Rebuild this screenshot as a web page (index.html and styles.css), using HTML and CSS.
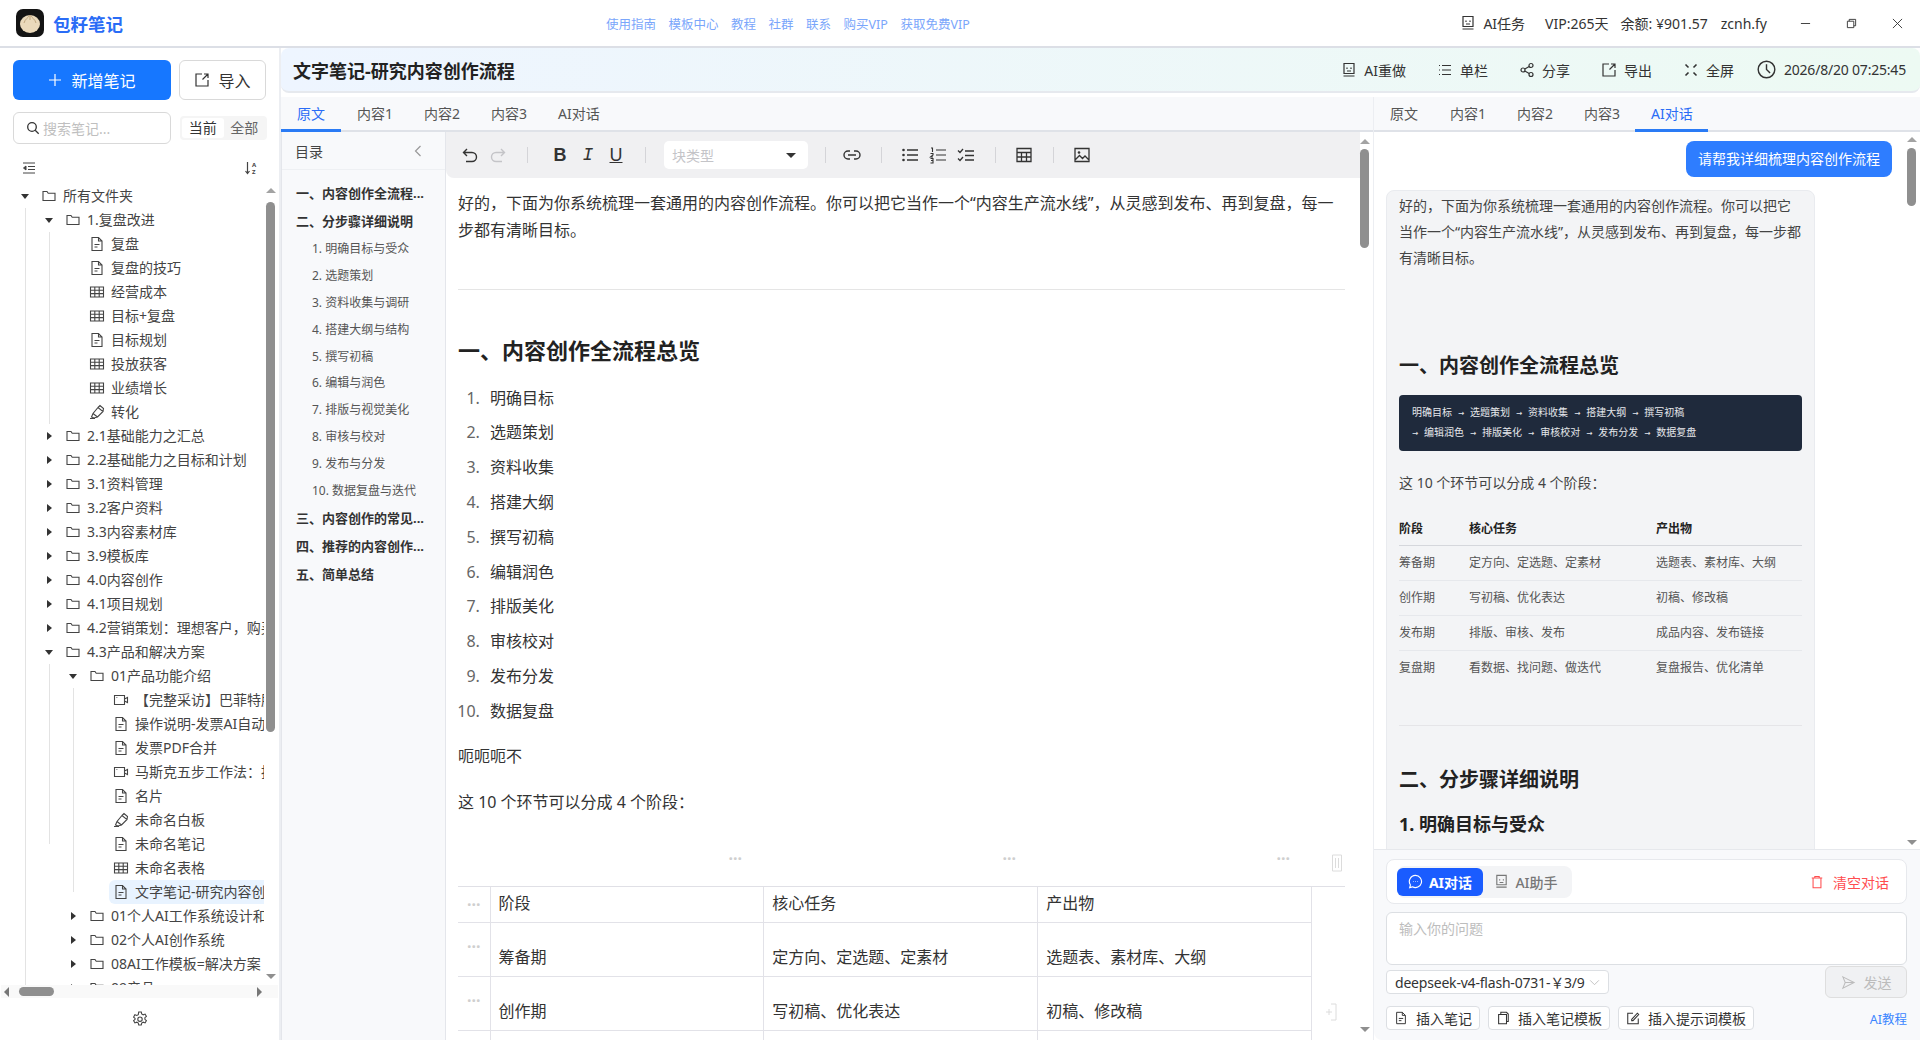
FILE: index.html
```html
<!DOCTYPE html>
<html lang="zh-CN">
<head>
  <meta charset="UTF-8">
  <title>包籽笔记</title>
  <link rel="stylesheet" href="styles.css">
</head>
<body>
  <svg class="sprite" aria-hidden="true">
    <symbol id="folder" viewBox="0 0 16 16"><path d="M2 3.5h4l1.2 1.7H14v7.3H2z" fill="none" stroke="currentColor" stroke-width="1.1"/></symbol>
    <symbol id="doc" viewBox="0 0 16 16"><path d="M3 1.5h6.5L13 5v9.5H3zM9.5 1.5V5H13M5.5 8.5h5M5.5 11h3" fill="none" stroke="currentColor" stroke-width="1.1"/></symbol>
    <symbol id="grid" viewBox="0 0 16 16"><path d="M1.5 3h13v10h-13zM1.5 6.3h13M1.5 9.6h13M5.8 3v10M10.2 3v10" fill="none" stroke="currentColor" stroke-width="1.1"/></symbol>
    <symbol id="video" viewBox="0 0 16 16"><path d="M1.5 3.5h10v9h-10zM11.5 7l3-1.5v5l-3-1.5M3.5 5.5h.8" fill="none" stroke="currentColor" stroke-width="1.1"/></symbol>
    <symbol id="board" viewBox="0 0 16 16"><path d="M1 14.5h5M2.500 13l1.500-3.500 5-6 5 4-5.500 5.500-3.500 1zM4 9.500l4.500 3.500M9 3.500l2-2 3.500 3-.5 3" fill="none" stroke="currentColor" stroke-width="1.1"/></symbol>
    <symbol id="robot" viewBox="0 0 16 16"><path d="M3 1.500h10v10H3zM2.500 14h11M6 5.500v1.500M10 5.500v1.500M6 9h4" fill="none" stroke="currentColor" stroke-width="1.2"/></symbol>
    <symbol id="lines" viewBox="0 0 16 16"><path d="M5 3.500h9M5 8h9M5 12.500h9M2 3.500h1M2 8h1M2 12.500h1" fill="none" stroke="currentColor" stroke-width="1.2"/></symbol>
    <symbol id="share" viewBox="0 0 16 16"><circle cx="4" cy="8" r="2" fill="none" stroke="currentColor" stroke-width="1.2"/><circle cx="12" cy="3.5" r="2" fill="none" stroke="currentColor" stroke-width="1.2"/><circle cx="12" cy="12.5" r="2" fill="none" stroke="currentColor" stroke-width="1.2"/><path d="M5.800 7l4.400-2.500M5.800 9l4.400 2.500" stroke="currentColor" stroke-width="1.2"/></symbol>
    <symbol id="export" viewBox="0 0 16 16"><path d="M8 2H2v12h12V8M8.500 7.500L14 2M10 2h4v4" fill="none" stroke="currentColor" stroke-width="1.2"/></symbol>
    <symbol id="full" viewBox="0 0 16 16"><path d="M2.500 2.500l3 3M13.500 2.500l-3 3M2.500 13.500l3-3M13.500 13.500l-3-3" fill="none" stroke="currentColor" stroke-width="1.6"/></symbol>
    <symbol id="clock" viewBox="0 0 16 16"><circle cx="8" cy="8" r="7" fill="none" stroke="currentColor" stroke-width="1.2"/><path d="M8 3.500V8l3 3" fill="none" stroke="currentColor" stroke-width="1.2"/></symbol>
    <symbol id="trash" viewBox="0 0 16 16"><path d="M2 3.500h12M5.500 3.500V1.800h5v1.700M3.500 3.500v11h9v-11" fill="none" stroke="currentColor" stroke-width="1.2"/></symbol>
  </svg>

  <header class="topbar">
    <div class="brand">
      <svg class="logo" viewBox="0 0 28 28"><rect width="28" height="28" rx="7" fill="#141414"/><ellipse cx="14" cy="15" rx="10" ry="9" fill="#ead9bb"/><path d="M14 6c-2 3-5 4-6 8M14 6c2 3 5 4 6 8M14 6v5" fill="none" stroke="#bfa67f" stroke-width="1"/></svg>
      <span>包籽笔记</span>
    </div>
    <nav class="topnav">
      <a>使用指南</a><a>模板中心</a><a>教程</a><a>社群</a><a>联系</a><a>购买VIP</a><a>获取免费VIP</a>
    </nav>
    <div class="topright">
      <span class="with-icon"><svg class="ic16"><use href="#robot"/></svg>AI任务</span>
      <span class="vip">VIP:265天</span>
      <span class="money">余额: ¥901.57</span>
      <span class="user">zcnh.fy</span>
    </div>
    <div class="winctl">
      <button><svg viewBox="0 0 12 12"><path d="M1 6h10" stroke="#333"/></svg></button>
      <button><svg viewBox="0 0 12 12"><path d="M1.500 3.500h7v7h-7zM3.500 3.500v-2h7v7h-2" fill="none" stroke="#333"/></svg></button>
      <button><svg viewBox="0 0 12 12"><path d="M1 1l10 10M11 1L1 11" stroke="#333"/></svg></button>
    </div>
  </header>

  <div class="layout">
    <aside class="sidebar">
      <div class="side-actions">
        <button class="btn-new"><svg viewBox="0 0 14 14"><path d="M7 1v12M1 7h12" stroke="#fff" stroke-width="1.2"/></svg>新增笔记</button>
        <button class="btn-import"><svg class="ic16"><use href="#export"/></svg>导入</button>
      </div>
      <div class="side-search">
        <div class="search">
          <svg viewBox="0 0 14 14"><circle cx="6" cy="6" r="4.300" fill="none" stroke="#333" stroke-width="1.3"/><path d="M9.200 9.200l3.500 3.500" stroke="#333" stroke-width="1.3"/></svg>
          <span>搜索笔记...</span>
        </div>
        <div class="scope"><span class="on">当前</span><span>全部</span></div>
      </div>
      <div class="tree-tools">
        <svg viewBox="0 0 14 12"><path d="M1 1h12M6 4.500h7M6 7.500h7M1 11h12M4 4L1.500 6 4 8z" fill="#444" stroke="#444" stroke-width="1"/></svg>
        <svg viewBox="0 0 14 14"><path d="M3.500 1v11M1.500 10l2 2.500 2-2.500" fill="none" stroke="#444" stroke-width="1.2"/><text x="8" y="6" class="az">A</text><text x="8" y="13" class="az">Z</text></svg>
      </div>
      <div class="tree-wrap">
        <div class="tree">
          <div class="row"><i class="caret open"></i><svg class="ic"><use href="#folder"/></svg><span>所有文件夹</span></div>
          <div class="row"><i class="ind g"></i><i class="caret open"></i><svg class="ic"><use href="#folder"/></svg><span>1.复盘改进</span></div>
          <div class="row"><i class="ind g"></i><i class="ind g"></i><i class="caret"></i><svg class="ic"><use href="#doc"/></svg><span>复盘</span></div>
          <div class="row"><i class="ind g"></i><i class="ind g"></i><i class="caret"></i><svg class="ic"><use href="#doc"/></svg><span>复盘的技巧</span></div>
          <div class="row"><i class="ind g"></i><i class="ind g"></i><i class="caret"></i><svg class="ic"><use href="#grid"/></svg><span>经营成本</span></div>
          <div class="row"><i class="ind g"></i><i class="ind g"></i><i class="caret"></i><svg class="ic"><use href="#grid"/></svg><span>目标+复盘</span></div>
          <div class="row"><i class="ind g"></i><i class="ind g"></i><i class="caret"></i><svg class="ic"><use href="#doc"/></svg><span>目标规划</span></div>
          <div class="row"><i class="ind g"></i><i class="ind g"></i><i class="caret"></i><svg class="ic"><use href="#grid"/></svg><span>投放获客</span></div>
          <div class="row"><i class="ind g"></i><i class="ind g"></i><i class="caret"></i><svg class="ic"><use href="#grid"/></svg><span>业绩增长</span></div>
          <div class="row"><i class="ind g"></i><i class="ind g"></i><i class="caret"></i><svg class="ic"><use href="#board"/></svg><span>转化</span></div>
          <div class="row"><i class="ind g"></i><i class="caret shut"></i><svg class="ic"><use href="#folder"/></svg><span>2.1基础能力之汇总</span></div>
          <div class="row"><i class="ind g"></i><i class="caret shut"></i><svg class="ic"><use href="#folder"/></svg><span>2.2基础能力之目标和计划</span></div>
          <div class="row"><i class="ind g"></i><i class="caret shut"></i><svg class="ic"><use href="#folder"/></svg><span>3.1资料管理</span></div>
          <div class="row"><i class="ind g"></i><i class="caret shut"></i><svg class="ic"><use href="#folder"/></svg><span>3.2客户资料</span></div>
          <div class="row"><i class="ind g"></i><i class="caret shut"></i><svg class="ic"><use href="#folder"/></svg><span>3.3内容素材库</span></div>
          <div class="row"><i class="ind g"></i><i class="caret shut"></i><svg class="ic"><use href="#folder"/></svg><span>3.9模板库</span></div>
          <div class="row"><i class="ind g"></i><i class="caret shut"></i><svg class="ic"><use href="#folder"/></svg><span>4.0内容创作</span></div>
          <div class="row"><i class="ind g"></i><i class="caret shut"></i><svg class="ic"><use href="#folder"/></svg><span>4.1项目规划</span></div>
          <div class="row"><i class="ind g"></i><i class="caret shut"></i><svg class="ic"><use href="#folder"/></svg><span>4.2营销策划：理想客户，购买路径</span></div>
          <div class="row"><i class="ind g"></i><i class="caret open"></i><svg class="ic"><use href="#folder"/></svg><span>4.3产品和解决方案</span></div>
          <div class="row"><i class="ind g"></i><i class="ind g"></i><i class="caret open"></i><svg class="ic"><use href="#folder"/></svg><span>01产品功能介绍</span></div>
          <div class="row"><i class="ind g"></i><i class="ind g"></i><i class="ind g"></i><i class="caret"></i><svg class="ic"><use href="#video"/></svg><span>【完整采访】巴菲特股东大会</span></div>
          <div class="row"><i class="ind g"></i><i class="ind g"></i><i class="ind g"></i><i class="caret"></i><svg class="ic"><use href="#doc"/></svg><span>操作说明-发票AI自动化处理</span></div>
          <div class="row"><i class="ind g"></i><i class="ind g"></i><i class="ind g"></i><i class="caret"></i><svg class="ic"><use href="#doc"/></svg><span>发票PDF合并</span></div>
          <div class="row"><i class="ind g"></i><i class="ind g"></i><i class="ind g"></i><i class="caret"></i><svg class="ic"><use href="#video"/></svg><span>马斯克五步工作法：拆解</span></div>
          <div class="row"><i class="ind g"></i><i class="ind g"></i><i class="ind g"></i><i class="caret"></i><svg class="ic"><use href="#doc"/></svg><span>名片</span></div>
          <div class="row"><i class="ind g"></i><i class="ind g"></i><i class="ind g"></i><i class="caret"></i><svg class="ic"><use href="#board"/></svg><span>未命名白板</span></div>
          <div class="row"><i class="ind g"></i><i class="ind g half"></i><i class="ind g"></i><i class="caret"></i><svg class="ic"><use href="#doc"/></svg><span>未命名笔记</span></div>
          <div class="row"><i class="ind g"></i><i class="ind"></i><i class="ind g"></i><i class="caret"></i><svg class="ic"><use href="#grid"/></svg><span>未命名表格</span></div>
          <div class="row"><i class="ind g"></i><i class="ind"></i><i class="ind g half"></i><i class="caret"></i><div class="selected"><svg class="ic"><use href="#doc"/></svg><span>文字笔记-研究内容创作流程</span></div></div>
          <div class="row"><i class="ind g"></i><i class="ind"></i><i class="caret shut"></i><svg class="ic"><use href="#folder"/></svg><span>01个人AI工作系统设计和实践</span></div>
          <div class="row"><i class="ind g"></i><i class="ind"></i><i class="caret shut"></i><svg class="ic"><use href="#folder"/></svg><span>02个人AI创作系统</span></div>
          <div class="row"><i class="ind g"></i><i class="ind"></i><i class="caret shut"></i><svg class="ic"><use href="#folder"/></svg><span>08AI工作模板=解决方案</span></div>
          <div class="row"><i class="ind g"></i><i class="ind"></i><i class="caret shut"></i><svg class="ic"><use href="#folder"/></svg><span>09产品</span></div>
        </div>
        <div class="vbar tree-bar"><i class="up"></i><b></b><i class="down"></i></div>
      </div>
      <div class="hbar"><i class="left"></i><b></b><i class="right"></i></div>
      <div class="side-foot">
        <svg viewBox="0 0 16 16"><path d="M6.700 1h2.600l.4 2 1.500.8 1.900-.7 1.300 2.300-1.500 1.300v1.600l1.500 1.300-1.300 2.300-1.900-.7-1.500.8-.4 2H6.700l-.4-2-1.500-.8-1.900.7-1.300-2.300 1.500-1.300V7.400L1.600 6.100l1.300-2.300 1.900.7 1.500-.8z" fill="none" stroke="#444" stroke-width="1.1"/><circle cx="8" cy="8.200" r="2.200" fill="none" stroke="#444" stroke-width="1.1"/></svg>
      </div>
    </aside>

    <main class="main">
      <div class="titlebar">
        <h1>文字笔记-研究内容创作流程</h1>
        <div class="title-actions">
          <span class="with-icon"><svg class="ic16"><use href="#robot"/></svg>AI重做</span>
          <span class="with-icon"><svg class="ic16"><use href="#lines"/></svg>单栏</span>
          <span class="with-icon"><svg class="ic16"><use href="#share"/></svg>分享</span>
          <span class="with-icon"><svg class="ic16"><use href="#export"/></svg>导出</span>
          <span class="with-icon"><svg class="ic16"><use href="#full"/></svg>全屏</span>
          <span class="with-icon time"><svg class="ic18"><use href="#clock"/></svg>2026/8/20 07:25:45</span>
        </div>
      </div>

      <div class="panes">
        <section class="pane-left">
          <div class="tabs">
            <a class="active">原文</a><a>内容1</a><a>内容2</a><a>内容3</a><a>AI对话</a>
          </div>
          <div class="left-body">
            <div class="toc">
              <div class="toc-head"><span>目录</span><svg viewBox="0 0 10 12"><path d="M7.500 1L2.500 6l5 5" fill="none" stroke="#999" stroke-width="1.2"/></svg></div>
              <ul class="toc-list">
                <li class="lv1">一、内容创作全流程...</li>
                <li class="lv1">二、分步骤详细说明</li>
                <li class="lv2">1. 明确目标与受众</li>
                <li class="lv2">2. 选题策划</li>
                <li class="lv2">3. 资料收集与调研</li>
                <li class="lv2">4. 搭建大纲与结构</li>
                <li class="lv2">5. 撰写初稿</li>
                <li class="lv2">6. 编辑与润色</li>
                <li class="lv2">7. 排版与视觉美化</li>
                <li class="lv2">8. 审核与校对</li>
                <li class="lv2">9. 发布与分发</li>
                <li class="lv2">10. 数据复盘与迭代</li>
                <li class="lv1">三、内容创作的常见...</li>
                <li class="lv1">四、推荐的内容创作...</li>
                <li class="lv1">五、简单总结</li>
              </ul>
            </div>
            <div class="editor">
              <div class="toolbar">
                <svg class="tb" viewBox="0 0 18 18"><path d="M6 3L2.500 6.500 6 10M3 6.500h8a4 4 0 0 1 0 9H5" fill="none" stroke="#333" stroke-width="1.4"/></svg>
                <svg class="tb" viewBox="0 0 18 18"><path d="M12 3l3.500 3.500L12 10M15 6.500H7a4 4 0 0 0 0 9h6" fill="none" stroke="#c4c4c8" stroke-width="1.4"/></svg>
                <i class="sep wide"></i>
                <b class="fmt">B</b><em class="fmt">I</em><u class="fmt">U</u>
                <i class="sep"></i>
                <div class="blocktype"><span>块类型</span><i></i></div>
                <i class="sep"></i>
                <svg class="tb link" viewBox="0 0 20 18"><path d="M8 5H6a4 4 0 0 0 0 8h2M12 5h2a4 4 0 0 1 0 8h-2M6 9h8" fill="none" stroke="#333" stroke-width="1.4"/></svg>
                <i class="sep"></i>
                <svg class="tb" viewBox="0 0 18 18"><path d="M6 4h11M6 9h11M6 14h11" stroke="#333" stroke-width="1.3"/><circle cx="2.500" cy="4" r="1.3" fill="#333"/><circle cx="2.500" cy="9" r="1.3" fill="#333"/><circle cx="2.500" cy="14" r="1.3" fill="#333"/></svg>
                <svg class="tb" viewBox="0 0 18 18"><path d="M7 4h10M7 9h10M7 14h10M2 2h1.500v4M1.500 7.500H4V9L1.500 11H4M1.500 12.500H4V17H1.500M2 14.500h2" fill="none" stroke="#333" stroke-width="1.1"/></svg>
                <svg class="tb" viewBox="0 0 18 18"><path d="M8 5h9M8 9.500h9M8 14h9M1 4.500l2 2 3-3.500M1 12.500l2 2 3-3.500" fill="none" stroke="#333" stroke-width="1.3"/></svg>
                <i class="sep"></i>
                <svg class="tb" viewBox="0 0 18 18"><path d="M2 2.500h14v13H2zM2 6.500h14M2 11h14M6.500 6.500v9M11.500 6.500v9" fill="none" stroke="#333" stroke-width="1.3"/></svg>
                <i class="sep"></i>
                <svg class="tb" viewBox="0 0 18 18"><path d="M2 2.500h14v13H2zM2.500 13.500l4-4 3 3 2.500-2.500 3.500 3.500" fill="none" stroke="#333" stroke-width="1.3"/><circle cx="6" cy="6.500" r="1.3" fill="#333"/></svg>
              </div>
              <div class="doc">
                <p class="intro">好的，下面为你系统梳理一套通用的内容创作流程。你可以把它当作一个“内容生产流水线”，从灵感到发布、再到复盘，每一步都有清晰目标。</p>
                <hr>
                <h2>一、内容创作全流程总览</h2>
                <ol>
                  <li>明确目标</li><li>选题策划</li><li>资料收集</li><li>搭建大纲</li><li>撰写初稿</li>
                  <li>编辑润色</li><li>排版美化</li><li>审核校对</li><li>发布分发</li><li>数据复盘</li>
                </ol>
                <p class="p1">呃呃呃不</p>
                <p class="p2">这 10 个环节可以分成 4 个阶段：</p>
                <div class="col-handles">
                  <span>···</span><span>···</span><span>···</span>
                  <svg viewBox="0 0 12 18"><path d="M1.500 1h9v16h-9zM4.500 4v10M7.500 4v10" fill="none" stroke="#dcdcdc"/></svg>
                </div>
                <div class="table-wrap">
                  <table class="edit-table">
                    <tr class="head"><td class="h">···</td><td>阶段</td><td>核心任务</td><td>产出物</td></tr>
                    <tr><td class="h">···</td><td>筹备期</td><td>定方向、定选题、定素材</td><td>选题表、素材库、大纲</td></tr>
                    <tr><td class="h">···</td><td>创作期</td><td>写初稿、优化表达</td><td>初稿、修改稿</td></tr>
                    <tr><td class="h">···</td><td>发布期</td><td>排版、审核、发布</td><td>成品内容、发布链接</td></tr>
                  </table>
                  <svg class="add-col" viewBox="0 0 12 18"><path d="M6 1h5v16H6M1 9h6M4 6v6" fill="none" stroke="#dcdcdc"/></svg>
                </div>
              </div>
            </div>
            <div class="vbar doc-bar"><i class="up"></i><b></b><i class="down"></i></div>
          </div>
        </section>

        <section class="pane-right">
          <div class="tabs">
            <a>原文</a><a>内容1</a><a>内容2</a><a>内容3</a><a class="active">AI对话</a>
          </div>
          <div class="chat-scroll">
            <div class="messages">
              <div class="msg-user">请帮我详细梳理内容创作流程</div>
              <div class="msg-ai">
                <p class="ai-intro">好的，下面为你系统梳理一套通用的内容创作流程。你可以把它当作一个“内容生产流水线”，从灵感到发布、再到复盘，每一步都有清晰目标。</p>
                <h2 class="ai-h1">一、内容创作全流程总览</h2>
                <pre>明确目标 → 选题策划 → 资料收集 → 搭建大纲 → 撰写初稿
→ 编辑润色 → 排版美化 → 审核校对 → 发布分发 → 数据复盘</pre>
                <p class="ai-p">这 10 个环节可以分成 4 个阶段：</p>
                <table class="ai-table">
                  <tr><th>阶段</th><th>核心任务</th><th>产出物</th></tr>
                  <tr><td>筹备期</td><td>定方向、定选题、定素材</td><td>选题表、素材库、大纲</td></tr>
                  <tr><td>创作期</td><td>写初稿、优化表达</td><td>初稿、修改稿</td></tr>
                  <tr><td>发布期</td><td>排版、审核、发布</td><td>成品内容、发布链接</td></tr>
                  <tr><td>复盘期</td><td>看数据、找问题、做迭代</td><td>复盘报告、优化清单</td></tr>
                </table>
                <hr>
                <h2 class="ai-h2">二、分步骤详细说明</h2>
                <h3>1. 明确目标与受众</h3>
              </div>
            </div>
            <div class="vbar chat-bar"><i class="up"></i><b></b><i class="down"></i></div>
          </div>
          <div class="chat-panel">
            <div class="mode-box">
              <div class="modes">
                <span class="mode on"><svg viewBox="0 0 16 16"><path d="M8 1.500a6.500 6.500 0 1 1-3.200 12.200L1.800 14.500l.8-2.800A6.500 6.500 0 0 1 8 1.500z" fill="none" stroke="#fff" stroke-width="1.2"/><path d="M5.300 8h.6M7.700 8h.6M10.100 8h.6" stroke="#fff" stroke-width="1.2"/></svg>AI对话</span>
                <span class="mode"><svg class="ic14"><use href="#robot"/></svg>AI助手</span>
              </div>
              <span class="clear"><svg class="ic14"><use href="#trash"/></svg>清空对话</span>
            </div>
            <div class="ask">输入你的问题</div>
            <div class="model-row">
              <div class="model"><span>deepseek-v4-flash-0731-￥3/9</span><svg viewBox="0 0 12 8"><path d="M1 1.500l5 5 5-5" fill="none" stroke="#bbb"/></svg></div>
              <button class="send"><svg viewBox="0 0 16 16"><path d="M2 2l12 6-12 6 2.500-6zM4.500 8H14" fill="none" stroke="#bcbcbc" stroke-width="1.1"/></svg>发送</button>
            </div>
            <div class="insert-row">
              <button><svg class="ic14"><use href="#doc"/></svg>插入笔记</button>
              <button><svg viewBox="0 0 16 16" class="ic14"><path d="M3 4h9v10.500H3zM5.500 4V1.500h6.500L14 3.500V12h-2" fill="none" stroke="currentColor" stroke-width="1.2"/></svg>插入笔记模板</button>
              <button><svg viewBox="0 0 16 16" class="ic14"><path d="M8 2.500H2v12h12V8.500M6.500 9.500L13 2.500l1.500 1.500-6.500 7H6.500z" fill="none" stroke="currentColor" stroke-width="1.2"/></svg>插入提示词模板</button>
              <a>AI教程</a>
            </div>
          </div>
        </section>
      </div>
    </main>
  </div>
</body>
</html>
```

FILE: styles.css
```css
:root {
  --blue: #1677ff;
  --line: #e4e6eb;
  --pane: #f8f9fb;
  --text: #333;
  --sans: "Noto Sans", "Noto Sans CJK SC", sans-serif;
}
* { box-sizing: border-box; }
html, body {
  margin: 0;
  height: 1040px;
  overflow: hidden;
}
body {
  font-family: var(--sans);
  font-size: 14px;
  color: var(--text);
  background: #fff;
}
svg { display: block; flex: none; }
button { font-family: inherit; }
.sprite { display: none; }
.ic { width: 16px; height: 16px; margin: 0 6px 0 4px; color: #444; }
.ic14 { width: 14px; height: 14px; }
.ic16 { width: 16px; height: 16px; }
.ic18 { width: 19px; height: 19px; }
.with-icon { display: flex; align-items: center; gap: 7px; }

/* top bar */
.topbar {
  height: 48px;
  display: flex;
  align-items: center;
  border-bottom: 2px solid #dcdfe6;
}
.brand {
  display: flex;
  align-items: center;
  gap: 9px;
  margin-left: 16px;
  width: 106px;
  flex: none;
  font-size: 17.5px;
  font-weight: 700;
  color: #2a6cf6;
  white-space: nowrap;
}
.logo { width: 28px; height: 28px; }
.topnav {
  display: flex;
  gap: 12.5px;
  margin-left: 484px;
  font-size: 12.5px;
  color: #7aa6fb;
}
.topright {
  display: flex;
  align-items: center;
  margin-left: auto;
  white-space: nowrap;
}
.vip { margin-left: 20px; }
.money { margin-left: 12px; }
.user { margin-left: 13px; margin-right: 15px; }
.winctl { display: flex; }
.winctl button {
  width: 46px;
  height: 46px;
  border: 0;
  background: none;
  display: flex;
  align-items: center;
  justify-content: center;
  padding: 0;
}
.winctl svg { width: 11px; height: 11px; }

.layout {
  height: 992px;
  display: grid;
  grid-template-columns: 281px 1fr;
  grid-template-rows: 992px;
}

/* sidebar */
.sidebar {
  display: flex;
  flex-direction: column;
  border-right: 2px solid #eceef2;
  min-width: 0;
  min-height: 0;
  overflow: hidden;
}
.side-actions {
  display: flex;
  gap: 8px;
  padding: 12px 0 0 13px;
}
.btn-new {
  width: 158px;
  height: 40px;
  border: 0;
  border-radius: 6px;
  background: var(--blue);
  color: #fff;
  font-size: 16px;
  display: flex;
  align-items: center;
  justify-content: center;
  gap: 9px;
}
.btn-new svg { width: 14px; height: 14px; }
.btn-import {
  width: 87px;
  height: 40px;
  border: 1px solid #d9d9d9;
  border-radius: 6px;
  background: #fff;
  color: #333;
  font-size: 16px;
  display: flex;
  align-items: center;
  justify-content: center;
  gap: 8px;
}
.side-search {
  display: flex;
  gap: 9px;
  padding: 12px 0 0 13px;
  align-items: center;
}
.search {
  width: 158px;
  height: 32px;
  border: 1px solid #d9d9d9;
  border-radius: 6px;
  display: flex;
  align-items: center;
  gap: 3px;
  padding-left: 12px;
  color: #bfbfbf;
}
.search svg { width: 14px; height: 14px; }
.scope {
  display: flex;
  width: 87px;
  height: 24px;
  padding: 2px;
  border-radius: 4px;
  background: #f5f5f5;
  color: #666;
  line-height: 20px;
}
.scope span { flex: 1; text-align: center; }
.scope .on { background: #fff; color: #333; border-radius: 3px; }
.tree-tools {
  height: 40px;
  display: flex;
  justify-content: space-between;
  padding: 18px 21px 0 22px;
  flex: none;
}
.tree-tools svg:first-child { width: 14px; height: 12px; }
.tree-tools svg:last-child { width: 14px; height: 14px; margin-top: -1px; }
.az { font-size: 6px; font-weight: 700; fill: #444; }
.tree-wrap {
  display: flex;
  height: 801px;
  flex: none;
}
.tree {
  width: 264px;
  flex: none;
  padding-left: 13px;
  overflow: hidden;
}
.row {
  height: 24px;
  display: flex;
  align-items: center;
  white-space: nowrap;
  color: #444;
}
.row span { margin-bottom: 2px; }
.ind { width: 24px; height: 24px; flex: none; }
.ind.g::before {
  content: "";
  display: block;
  width: 12px;
  height: 24px;
  margin-left: 12px;
  border-left: 1px solid #e3e3e3;
}
.ind.half::before { height: 12px; }
.caret { width: 24px; height: 24px; flex: none; display: flex; align-items: center; justify-content: center; }
.caret.open::before {
  content: "";
  border: 4px solid transparent;
  border-top: 5px solid #333;
  border-bottom: 0;
  width: 0;
}
.caret.shut::before {
  content: "";
  border: 4px solid transparent;
  border-left: 5px solid #333;
  border-right: 0;
}
.selected {
  display: flex;
  align-items: center;
  height: 24px;
  flex: 1;
  border-radius: 6px 0 0 6px;
  background: #e8f3ff;
  overflow: hidden;
}
.vbar {
  display: flex;
  flex-direction: column;
  align-items: center;
  flex: none;
}
.vbar b { display: block; width: 9px; background: #8f8f8f; border-radius: 5px; }
.vbar .up, .vbar .down { width: 0; border: 5px solid transparent; flex: none; }
.vbar .up { border-bottom: 5px solid #a3a3a3; border-top: 0; }
.vbar .down { border-top: 5px solid #8f8f8f; border-bottom: 0; margin-top: auto; }
.tree-bar { width: 13px; padding: 4px 0 6px; }
.tree-bar b { height: 530px; margin-top: 9px; }
.hbar {
  height: 13px;
  flex: none;
  margin-left: 1px;
  background: #f9f9f9;
  display: flex;
  align-items: center;
  padding: 0 16px 0 3px;
  width: 277px;
}
.hbar b { width: 35px; height: 9px; border-radius: 5px; background: #8f8f8f; margin-left: 10px; }
.hbar i { width: 0; border: 5px solid transparent; }
.hbar .left { border-right: 5px solid #777; border-left: 0; }
.hbar .right { border-left: 5px solid #777; border-right: 0; margin-left: auto; }
.side-foot {
  flex: 1;
  display: flex;
  align-items: center;
  justify-content: center;
}
.side-foot svg { width: 16px; height: 16px; }

/* title bar */
.main { display: flex; flex-direction: column; min-width: 0; min-height: 0; }
.titlebar {
  height: 45px;
  flex: none;
  display: flex;
  align-items: center;
  justify-content: space-between;
  padding: 0 14px 0 12px;
  border-radius: 8px;
  border-bottom: 2px solid #e6e9ee;
  background: linear-gradient(90deg, #eef5ff, #edfaf3);
}
.titlebar h1 { margin: 0; font-size: 18px; font-weight: 700; color: #222; }
.title-actions { display: flex; gap: 31px; align-items: center; }
.title-actions .time { gap: 8px; margin-left: -8px; letter-spacing: -0.2px; }

/* panes */
.panes {
  flex: 1;
  min-height: 0;
  margin-top: 4px;
  display: grid;
  grid-template-columns: 1092px 1fr;
  grid-template-rows: 943px;
}
.pane-left, .pane-right {
  display: flex;
  flex-direction: column;
  min-height: 0;
  min-width: 0;
}
.tabs {
  height: 35px;
  flex: none;
  display: flex;
  background: var(--pane);
  border-bottom: 2px solid #dfe2e8;
  color: #555;
}
.tabs a { padding: 0 15px 0 16px; line-height: 33px; height: 35px; }
.tabs a:first-child { padding-right: 16px; }
.tabs .active { color: #2a6cf6; border-bottom: 3px solid #2a7bf5; }
.left-body { flex: 1; min-height: 0; display: flex; }
.toc {
  width: 165px;
  flex: none;
  background: var(--pane);
  border-right: 1px solid var(--line);
  border-left: 1px solid var(--line);
}
.toc-head {
  height: 38px;
  display: flex;
  align-items: center;
  justify-content: space-between;
  padding: 0 22px 0 13px;
  border-bottom: 1px solid #eef0f3;
  color: #444;
}
.toc-head svg { width: 10px; height: 12px; }
.toc-list { list-style: none; margin: 0; padding: 10px 0 0; }
.toc-list .lv1 { height: 28px; line-height: 26px; padding-left: 14px; font-size: 13px; font-weight: 700; color: #333; }
.toc-list .lv2 { height: 26.9px; line-height: 26.9px; padding-left: 30px; font-size: 12px; color: #555; }

/* editor */
.editor { width: 914px; flex: none; display: flex; flex-direction: column; min-height: 0; }
.toolbar {
  height: 46px;
  flex: none;
  display: flex;
  align-items: center;
  padding-left: 15px;
  background: #f0f0f2;
  border-radius: 0 0 0 8px;
}
.tb { width: 18px; height: 18px; margin-right: 10px; }
.tb.link { width: 20px; margin: 0 9px 0 -3px; }
.sep { width: 1px; height: 16px; background: #d4d4d8; margin: 0 19px 0 10px; }
.sep.wide { margin-right: 23px; }
.fmt {
  width: 18px;
  margin-right: 10px;
  text-align: center;
  font-family: "Liberation Sans", sans-serif;
  font-size: 18px;
  font-style: normal;
  color: #333;
}
em.fmt { font-family: "Liberation Mono", monospace; font-style: italic; }
.blocktype {
  width: 144px;
  height: 28px;
  background: #fff;
  border-radius: 5px;
  display: flex;
  align-items: center;
  justify-content: space-between;
  padding: 0 12px 0 8px;
  color: #c4c4c8;
  margin-right: 7px;
  margin-left: -1px;
}
.blocktype i { border: 5px solid transparent; border-top: 5px solid #333; border-bottom: 0; }
.doc {
  flex: 1;
  min-height: 0;
  overflow: hidden;
  padding: 12px 15px 0 12px;
  font-size: 16px;
  line-height: 27px;
  color: #333;
}
.doc p { margin: 0; }
.doc hr { margin: 45px 0 0; border: 0; border-top: 1px solid #e5e5e5; }
.doc h2 { margin: 45px 0 0; font-size: 22px; line-height: 30px; font-weight: 700; color: #222; }
.doc ol { margin: 15.6px 0 0; padding: 0 0 0 26px; }
.doc li { height: 34.8px; line-height: 34.8px; padding-left: 6px; }
.doc li::marker { color: #666; }
.doc .p1 { margin-top: 14px; }
.doc .p2 { margin-top: 19px; }
.col-handles {
  margin-top: 33px;
  height: 37px;
  display: grid;
  grid-template-columns: 32px 274px 274px 274px 1fr;
  color: #cfcfcf;
  font-size: 16px;
  font-weight: 700;
  line-height: 18px;
}
.col-handles span { text-align: right; padding-right: 22px; }
.col-handles span:first-child { grid-column: 2; }
.col-handles svg { width: 12px; height: 18px; margin: 5px 0 0 19px; }
.table-wrap { display: flex; border-top: 1px solid #e0e0e6; }
.edit-table {
  width: 854px;
  flex: none;
  table-layout: fixed;
  border-collapse: collapse;
}
.edit-table td {
  border: 1px solid #e2e2e8;
  border-top: 0;
  padding: 0 8px 5px 8px;
  vertical-align: bottom;
  height: 54px;
}
.edit-table td:first-child { width: 32px; border-left: 0; }
.edit-table .head td { height: 36px; vertical-align: middle; padding-bottom: 1px; }
.edit-table td.h {
  color: #cfcfcf;
  text-align: center;
  vertical-align: top;
  font-size: 16px;
  font-weight: 700;
  line-height: 16px;
  padding: 15px 0 0;
}
.edit-table .head td.h { vertical-align: top; padding-top: 9px; }
.add-col { width: 12px; height: 18px; margin: 116px 0 0 13px; }
.doc-bar { width: 12px; padding: 7px 3px 8px 0; background: #fff; }
.doc-bar b { height: 99px; margin-top: 5px; }

/* ai chat */
.pane-right { border-left: 1px solid #eceef2; }
.chat-scroll {
  height: 717px;
  flex: none;
  display: flex;
  overflow: hidden;
}
.messages {
  width: 533px;
  flex: none;
  overflow: hidden;
  padding: 9px 15px 0 12px;
}
.msg-user {
  width: 206px;
  height: 36px;
  margin-left: auto;
  border-radius: 8px;
  background: #2e7dff;
  color: #fff;
  line-height: 36px;
  text-align: center;
}
.msg-ai {
  width: 429px;
  margin-top: 13px;
  padding: 2px 12px 0;
  height: 700px;
  background: #f3f4f6;
  border-radius: 8px;
  border: 1px solid #e9ebef;
  color: #444;
  line-height: 26px;
}
.msg-ai p { margin: 0; }
.ai-h1, .ai-h2 { font-size: 20px; line-height: 28px; font-weight: 700; color: #222; }
.ai-h1 { margin: 81px 0 0; }
.ai-h2 { margin: 40px 0 0; }
.msg-ai pre {
  margin: 15px 0 0;
  padding: 8px 13px;
  height: 56px;
  background: #1f2a3c;
  border-radius: 4px;
  color: #e5e7eb;
  font-family: "DejaVu Sans Mono", "Noto Sans CJK SC", monospace;
  font-size: 10px;
  line-height: 20px;
}
.msg-ai .ai-p { margin-top: 19px; }
.ai-table {
  width: 100%;
  margin-top: 17px;
  border-collapse: collapse;
  table-layout: fixed;
  font-size: 12px;
}
.ai-table th { height: 32px; text-align: left; font-weight: 700; color: #222; border-bottom: 1px solid #d5d7dc; padding: 0; }
.ai-table td { height: 35px; border-bottom: 1px solid #e6e8ec; color: #555; padding: 0; }
.ai-table tr:last-child td { border-bottom: 0; }
.ai-table th:nth-child(1) { width: 70px; }
.ai-table th:nth-child(2) { width: 187px; }
.msg-ai hr { margin: 40px 0 0; border: 0; border-top: 1px solid #e5e5e8; }
.msg-ai h3 { margin: 17px 0 0; font-size: 18px; line-height: 26px; font-weight: 700; color: #222; }
.chat-bar { width: 13px; padding: 5px 4px 4px 0; }
.chat-bar b { height: 58px; margin-top: 6px; }

.chat-panel {
  flex: 1;
  min-height: 0;
  background: var(--pane);
  border-top: 1px solid #e6e8ec;
  padding: 9px 13px 0 12px;
  border-radius: 0 0 0 8px;
}
.mode-box {
  height: 45px;
  display: flex;
  align-items: center;
  justify-content: space-between;
  padding: 0 17px 0 10px;
  background: #fff;
  border: 1px solid #e7e9ed;
  border-radius: 8px;
}
.modes { display: flex; height: 32px; padding: 2px 0; background: #f3f4f6; border-radius: 8px; width: 175px; }
.mode {
  display: flex;
  align-items: center;
  gap: 6px;
  width: 86px;
  justify-content: center;
  color: #777;
  font-weight: 500;
}
.mode.on { background: #1a5cff; color: #fff; border-radius: 6px; font-weight: 700; }
.mode svg { width: 15px; height: 15px; }
.clear { display: flex; align-items: center; gap: 9px; color: #ff4d4f; }
.ask {
  margin-top: 8px;
  height: 53px;
  background: #fff;
  border: 1px solid #dcdfe3;
  border-radius: 6px;
  padding: 5px 12px;
  color: #bdbdbd;
  line-height: 22px;
}
.model-row { display: flex; justify-content: space-between; align-items: flex-start; }
.model {
  width: 223px;
  height: 24px;
  margin-top: 5px;
  display: flex;
  align-items: center;
  justify-content: space-between;
  padding: 0 8px;
  background: #fff;
  border: 1px solid #dcdfe3;
  border-radius: 4px;
  white-space: nowrap;
  letter-spacing: -0.2px;
}
.model svg { width: 11px; height: 7px; }
.send {
  width: 82px;
  height: 32px;
  margin-top: 1px;
  border: 1px solid #dedede;
  border-radius: 6px;
  background: #f0f1f3;
  color: #bcbcbc;
  font-size: 14px;
  display: flex;
  align-items: center;
  justify-content: center;
  gap: 8px;
}
.send svg { width: 15px; height: 15px; }
.insert-row { display: flex; align-items: center; gap: 8px; margin-top: 8px; }
.insert-row button {
  height: 24px;
  padding: 0 7px;
  display: flex;
  align-items: center;
  gap: 8px;
  background: #fff;
  border: 1px solid #dcdfe3;
  border-radius: 4px;
  color: #333;
  font-size: 14px;
}
.insert-row a { margin-left: auto; font-size: 12.5px; color: #3b86ff; }
```
